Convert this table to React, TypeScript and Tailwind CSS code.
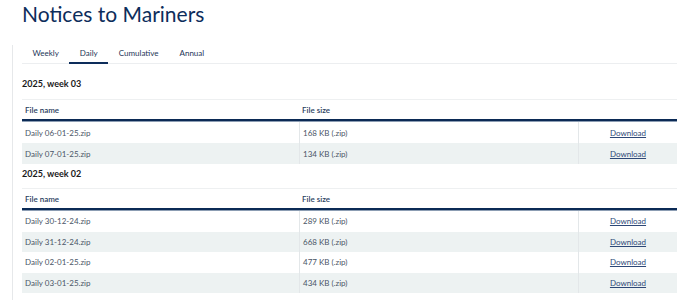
import React from "react"

const weeks = [
  {
    label: "2025, week 03",
    files: [
      { name: "Daily 06-01-25.zip", size: "168 KB (.zip)" },
      { name: "Daily 07-01-25.zip", size: "134 KB (.zip)" },
    ],
  },
  {
    label: "2025, week 02",
    files: [
      { name: "Daily 30-12-24.zip", size: "289 KB (.zip)" },
      { name: "Daily 31-12-24.zip", size: "668 KB (.zip)" },
      { name: "Daily 02-01-25.zip", size: "477 KB (.zip)" },
      { name: "Daily 03-01-25.zip", size: "434 KB (.zip)" },
    ],
  },
]

const tabs = ["Weekly", "Daily", "Cumulative", "Annual"]

function FileTable({ files, tight }: { files: { name: string; size: string }[]; tight?: boolean }) {
  return (
    <div className="border-t border-[#eef0f1]">
      <div className="grid grid-cols-[277px_279px_1fr] h-[21px] items-center text-[8px] font-semibold text-[#2a4060] border-b-2 border-[#0b2a55]">
        <div className="pl-[3px]">File name</div>
        <div className="pl-[3px]">File size</div>
        <div></div>
      </div>
      <div className="h-px bg-[#8c9db3]"></div>
      {files.map((f, i) => (
        <div
          key={f.name}
          className={
            "grid grid-cols-[277px_279px_1fr] items-center text-[8px] text-[#4a5566] " +
            (tight ? "h-[20.5px] " : "h-[21px] ") +
            (i % 2 === 1 ? "bg-[#edf2f2]" : "bg-white")
          }
        >
          <div className="pl-[3px] h-full flex items-center">{f.name}</div>
          <div className="pl-[3px] h-full flex items-center border-l border-[#e3e7e9]">{f.size}</div>
          <div className="h-full flex items-center justify-center border-l border-[#e3e7e9]">
            <a href="#" className="underline text-[#2d4877]">Download</a>
          </div>
        </div>
      ))}
    </div>
  )
}

export default function App() {
  return (
    <div className="w-[700px] h-[300px] overflow-hidden bg-white font-['Lato',sans-serif]">
      <h1 className="pl-[22px] text-[21px] leading-[28px] text-[#0d2d5b]">Notices to Mariners</h1>
      <div className="ml-[12px] mt-[17px] border-l border-[#e6e8ea] pl-[9px] pr-[23px] h-[260px]">
        <div className="flex border-b border-[#eceef0]">
          {tabs.map((t) => (
            <div
              key={t}
              className={
                "px-[10.5px] pt-[3px] pb-[4px] -mb-px text-[8px] leading-[10px] text-[#1d3557] border-b-2 " +
                (t === "Daily" ? "border-[#0d2d5b]" : "border-transparent")
              }
            >
              {t}
            </div>
          ))}
        </div>
        {weeks.map((w, i) => (
          <div key={w.label}>
            <div
              className={
                "text-[9px] leading-[12px] font-bold text-[#1a1a1a] " +
                (i === 0 ? "mt-[14px] mb-[9px]" : "mt-[4px] mb-[8px]")
              }
            >
              {w.label}
            </div>
            <FileTable files={w.files} tight={i > 0} />
          </div>
        ))}
      </div>
    </div>
  )
}
